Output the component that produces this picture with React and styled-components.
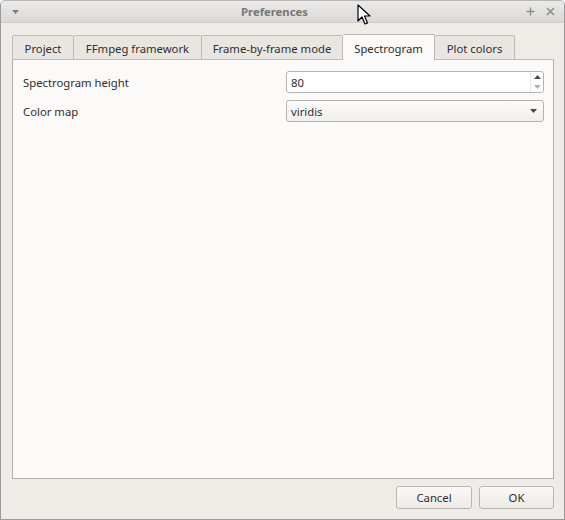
import React from "react";
import styled, { createGlobalStyle } from "styled-components";

const Global = createGlobalStyle`
  html, body { margin: 0; padding: 0; background: #ffffff; }
  body { font-family: "Noto Sans", "DejaVu Sans", sans-serif; font-size: 11.3px; color: #2e2e2e; }
  * { box-sizing: border-box; }
`;

const Window = styled.div`
  position: relative;
  width: 565px;
  height: 520px;
  display: flex;
  flex-direction: column;
  background: #efece8;
  border: 1px solid #9c9a98;
  border-top-color: #b8b6b4;
  border-radius: 5px 5px 0 0;
  overflow: hidden;
`;

const TitleBar = styled.div`
  height: 22px;
  flex: none;
  display: grid;
  grid-template-columns: 40px 1fr 40px;
  align-items: center;
  background: linear-gradient(#ebeae8, #dad9d7);
  border-bottom: 1px solid #cfcdca;
  color: #7b7b7b;
`;

const Title = styled.div`
  text-align: center;
  font-weight: bold;
  font-size: 11.3px;
  color: #767676;
  padding-right: 16px;
`;

const TitleLeft = styled.div`
  display: flex;
  align-items: center;
  padding-left: 11px;
`;

const TitleRight = styled.div`
  display: flex;
  align-items: center;
  justify-content: flex-end;
  gap: 11px;
  padding-right: 9px;
`;

const Body = styled.div`
  flex: 1;
  display: flex;
  flex-direction: column;
  padding: 10px 10px 10px 11px;
`;

const TabBar = styled.div`
  display: flex;
  align-items: flex-end;
  height: 27px;
  position: relative;
  z-index: 1;
`;

const Tab = styled.div`
  height: ${(p) => (p.$active ? "27px" : "25px")};
  display: flex;
  align-items: center;
  justify-content: center;
  padding-top: 1px;
  width: ${(p) => p.$w}px;
  background: ${(p) => (p.$active ? "#fcfaf8" : "#e9e6e2")};
  border: 1px solid #bdb9b5;
  border-left-width: ${(p) => (p.$first ? "1px" : "0")};
  border-bottom: ${(p) => (p.$active ? "1px solid #fcfaf8" : "1px solid #bdb9b5")};
  border-radius: 2px 2px 0 0;
  color: #2e2e2e;
  white-space: nowrap;
  margin-bottom: ${(p) => (p.$active ? "-1px" : "0")};
`;

const Panel = styled.div`
  flex: 1;
  background: #fcfaf8;
  border: 1px solid #b3afab;
  border-top-color: #bdb9b5;
  padding: 11px 9px 0 10px;
  display: grid;
  grid-template-columns: 1fr 258px;
  grid-auto-rows: 22px;
  row-gap: 7px;
  align-content: start;
  margin-top: -1px;
`;

const Label = styled.div`
  display: flex;
  align-items: center;
  padding-top: 1px;
  color: #2e2e2e;
`;

const Field = styled.div`
  height: 22px;
  display: flex;
  align-items: center;
  border: 1px solid #b7b3af;
  border-radius: 3px;
  background: ${(p) => (p.$combo ? "linear-gradient(#fdfcfb, #f1efed)" : "#ffffff")};
  padding-left: 4px;
  color: #2e2e2e;
`;

const FieldText = styled.div`
  flex: 1;
`;

const SpinArrows = styled.div`
  width: 13px;
  height: 100%;
  display: flex;
  flex-direction: column;
  align-items: center;
  justify-content: center;
  gap: 6px;
  border-left: 1px solid #ebe9e7;
`;

const ComboArrow = styled.div`
  width: 20px;
  display: flex;
  justify-content: center;
`;

const Footer = styled.div`
  display: flex;
  justify-content: flex-end;
  gap: 7px;
  padding-top: 7px;
`;

const Button = styled.button`
  font-family: inherit;
  font-size: 11.3px;
  height: 23px;
  width: ${(p) => p.$w}px;
  border: 1px solid #b9b5b1;
  border-radius: 3px;
  background: linear-gradient(#fbfaf9, #ece9e6);
  color: #2e2e2e;
  padding: 0;
`;

const Cursor = styled.svg`
  position: absolute;
  left: 356px;
  top: 3px;
`;

const Tri = ({ up, color }) => (
  <svg width="7" height="4" viewBox="0 0 7 4">
    <path d={up ? "M0 4 L3.5 0 L7 4 Z" : "M0 0 L7 0 L3.5 4 Z"} fill={color} />
  </svg>
);

const tabs = [
  { t: "Project", w: 62 },
  { t: "FFmpeg framework", w: 128 },
  { t: "Frame-by-frame mode", w: 141 },
  { t: "Spectrogram", w: 92, active: true },
  { t: "Plot colors", w: 80 },
];

export default function App() {
  return (
    <>
      <Global />
      <Window>
        <TitleBar>
          <TitleLeft>
            <Tri color="#7d7d7d" />
          </TitleLeft>
          <Title>Preferences</Title>
          <TitleRight>
            <svg width="9" height="9" viewBox="0 0 9 9">
              <path d="M4.5 0.5 V8.5 M0.5 4.5 H8.5" stroke="#8a8a8a" strokeWidth="1.3" />
            </svg>
            <svg width="9" height="9" viewBox="0 0 9 9">
              <path d="M1 1 L8 8 M8 1 L1 8" stroke="#8a8a8a" strokeWidth="1.5" />
            </svg>
          </TitleRight>
        </TitleBar>
        <Body>
          <TabBar>
            {tabs.map((tb, i) => (
              <Tab key={tb.t} $w={tb.w} $first={i === 0} $active={tb.active}>
                {tb.t}
              </Tab>
            ))}
          </TabBar>
          <Panel>
            <Label>Spectrogram height</Label>
            <Field>
              <FieldText>80</FieldText>
              <SpinArrows>
                <Tri up color="#4a4a4a" />
                <Tri color="#b0b0b0" />
              </SpinArrows>
            </Field>
            <Label>Color map</Label>
            <Field $combo>
              <FieldText>viridis</FieldText>
              <ComboArrow>
                <Tri color="#4a4a4a" />
              </ComboArrow>
            </Field>
          </Panel>
          <Footer>
            <Button $w={76}>Cancel</Button>
            <Button $w={75}>OK</Button>
          </Footer>
        </Body>
        <Cursor width="14" height="22" viewBox="0 0 14 22">
          <path
            d="M1 1 L1 17 L5 13 L8 20 L10.5 19 L7.5 12 L13 12 Z"
            fill="#ffffff"
            stroke="#000000"
            strokeWidth="1.2"
            strokeLinejoin="round"
          />
        </Cursor>
      </Window>
    </>
  );
}
